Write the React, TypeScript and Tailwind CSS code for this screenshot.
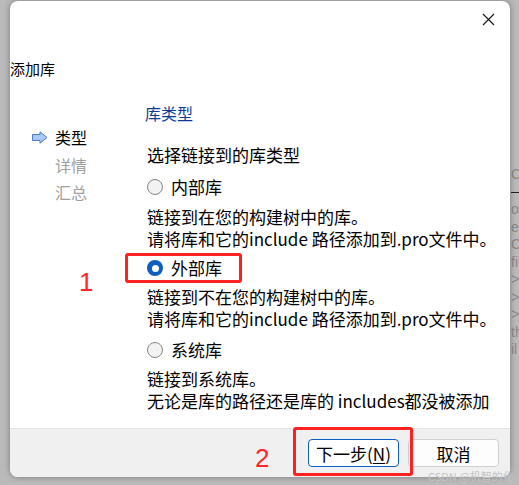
import React from 'react';

const FONT = { fontFamily: '"Noto Sans CJK SC", "Noto Sans", sans-serif' };
const LATIN = { fontFamily: '"Liberation Sans", sans-serif' };

function Radio({ checked }: { checked?: boolean }) {
  if (checked) {
    return (
      <span className="w-[16px] h-[16px] rounded-full bg-[#0a5fc0] flex items-center justify-center shrink-0">
        <span className="w-[7px] h-[7px] rounded-full bg-white" />
      </span>
    );
  }
  return <span className="w-[16px] h-[16px] rounded-full border border-[#858585] bg-[#f2f2f2] shrink-0" />;
}

function Option({ label, checked }: { label: string; checked?: boolean }) {
  return (
    <div className="flex items-center gap-[8px] h-[22px] pl-[2px]">
      <Radio checked={checked} />
      <span>{label}</span>
    </div>
  );
}

function StepArrow() {
  return (
    <svg width="16" height="13" viewBox="0 0 16 13">
      <polygon
        points="0.5,3.5 8,3.5 8,0.8 15,6.5 8,12.2 8,9.5 0.5,9.5"
        fill="#a9c9f2"
        stroke="#4a7ccb"
        strokeWidth="1"
        strokeLinejoin="round"
      />
    </svg>
  );
}

export default function App() {
  // faint window behind the dialog, right edge
  const behind = ['C', '', 'o', 'es', 'Ct', 'fi', '>', '>', '>', 'th', 'il'];

  return (
    <div className="relative w-[519px] h-[485px] bg-[#bababa] flex overflow-hidden text-black" style={FONT}>
      <div className="w-[10px] shrink-0" />

      {/* dialog */}
      <div className="mt-[1px] w-[500px] h-[476px] shrink-0 bg-white rounded-[8px] flex flex-col overflow-hidden shadow-[0_0_6px_rgba(0,0,0,0.35)] z-10">
        <div className="h-[36px] flex items-center justify-end pr-[15px]">
          <svg width="13" height="13" viewBox="0 0 13 13">
            <path d="M1 1 L12 12 M12 1 L1 12" stroke="#1a1a1a" strokeWidth="1.2" />
          </svg>
        </div>

        <div className="mt-[22px] text-[15px] leading-[20px]">添加库</div>

        <div className="flex mt-[23px]">
          {/* steps */}
          <div className="w-[135px] shrink-0 pl-[22px] pt-[24px] text-[16px] leading-[22px]">
            <div className="flex items-center gap-[7px]">
              <StepArrow />
              <span>类型</span>
            </div>
            <div className="mt-[6px] pl-[23px] text-[#a0a0a0]">详情</div>
            <div className="mt-[5px] pl-[23px] text-[#a0a0a0]">汇总</div>
          </div>

          {/* content */}
          <div className="flex-1 text-[17px] leading-[22px]">
            <div className="text-[16px] text-[#0d3a94]">库类型</div>
            <div className="mt-[20px] pl-[2px]">选择链接到的库类型</div>

            <div className="mt-[10px]">
              <Option label="内部库" />
            </div>
            <div className="mt-[8px] pl-[2px] whitespace-nowrap">
              <div>链接到在您的构建树中的库。</div>
              <div>请将库和它的include 路径添加到.pro文件中。</div>
            </div>

            <div className="mt-[7px]">
              <Option label="外部库" checked />
            </div>
            <div className="mt-[7px] pl-[2px] whitespace-nowrap">
              <div>链接到不在您的构建树中的库。</div>
              <div>请将库和它的include 路径添加到.pro文件中。</div>
            </div>

            <div className="mt-[9px]">
              <Option label="系统库" />
            </div>
            <div className="mt-[7px] pl-[2px] whitespace-nowrap">
              <div>链接到系统库。</div>
              <div>无论是库的路径还是库的 includes都没被添加</div>
            </div>
          </div>
        </div>

        {/* footer */}
        <div className="mt-auto h-[49px] bg-[#f0f0f0] border-t border-[#e3e3e3] flex justify-end items-start pt-[10px] pr-[11px] gap-[9px]">
          <button className="w-[91px] h-[28px] bg-white border border-[#0a5fc0] rounded-[4px] text-[17px] leading-none">
            下一步(<span className="underline underline-offset-2">N</span>)
          </button>
          <button className="w-[91px] h-[28px] bg-[#fdfdfd] border border-[#d0d0d0] rounded-[4px] text-[17px] leading-none">
            取消
          </button>
        </div>
      </div>

      {/* window behind */}
      <div className="flex-1 pt-[166px] pl-[1px] text-[14px] leading-[17.5px] text-[#8a8a8a] overflow-hidden whitespace-nowrap" style={LATIN}>
        {behind.map((t, i) =>
          i === 1 ? (
            <div key={i} className="h-[17.5px] flex items-center">
              <div className="w-full h-[1px] bg-[#222]" />
            </div>
          ) : (
            <div key={i} className="h-[17.5px] overflow-hidden">{t}</div>
          )
        )}
      </div>

      {/* annotations */}
      <div className="absolute left-[125px] top-[253px] w-[117px] h-[30px] border-[3px] border-[#ff2020] rounded-[3px] z-20" />
      <div className="absolute left-[293px] top-[427px] w-[120px] h-[49px] border-[3px] border-[#ff2020] rounded-[3px] z-20" />
      <div className="absolute left-[79px] top-[267px] text-[26px] leading-[30px] text-[#ff2828] z-20" style={LATIN}>1</div>
      <div className="absolute left-[255px] top-[443px] text-[26px] leading-[30px] text-[#ff2828] z-20" style={LATIN}>2</div>
      <div className="absolute left-[428px] top-[470px] text-[11px] leading-[13px] text-[#c4c4c4] z-20">CSDN @机智的化身</div>
    </div>
  );
}
